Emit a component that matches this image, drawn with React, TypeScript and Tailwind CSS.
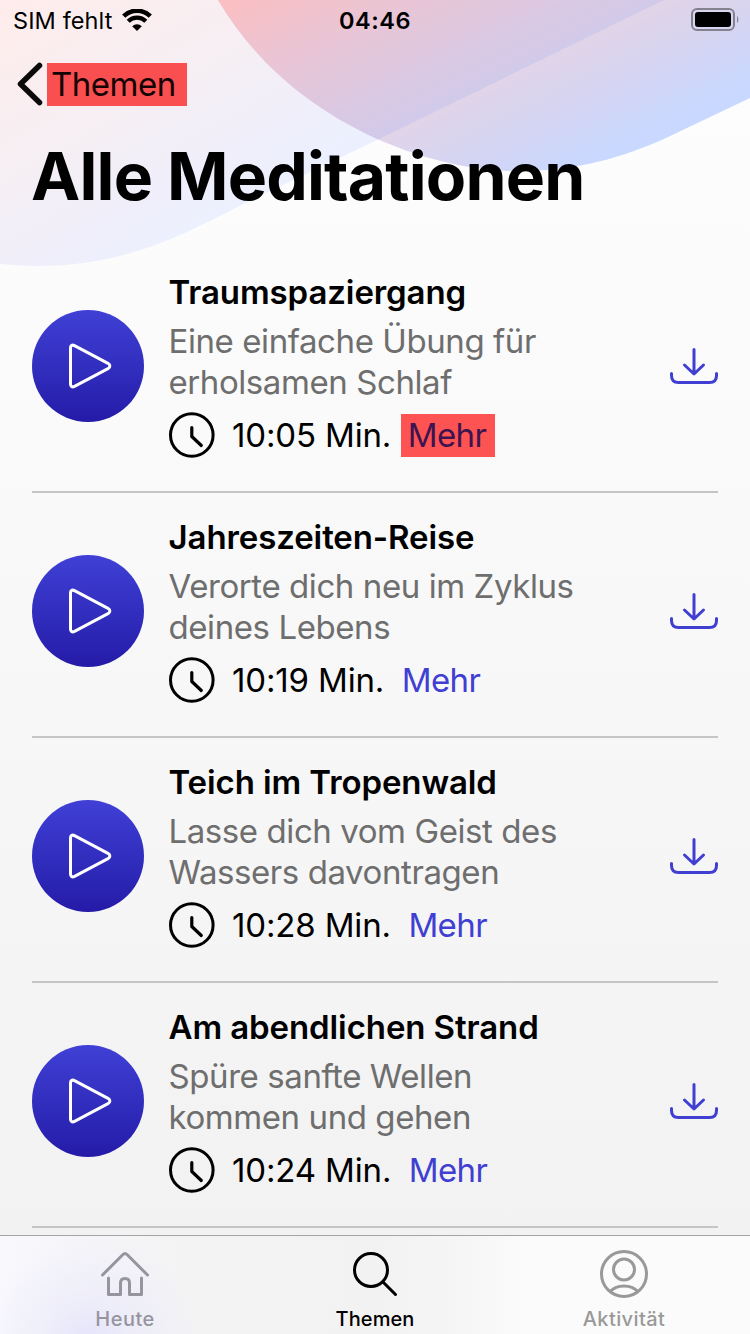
import React from "react";

type Meditation = {
  title: string;
  lines: [string, string];
  duration: string;
  marked?: boolean;
};

const meditations: Meditation[] = [
  {
    title: "Traumspaziergang",
    lines: ["Eine einfache Übung für", "erholsamen Schlaf"],
    duration: "10:05 Min.",
    marked: true,
  },
  {
    title: "Jahreszeiten-Reise",
    lines: ["Verorte dich neu im Zyklus", "deines Lebens"],
    duration: "10:19 Min.",
  },
  {
    title: "Teich im Tropenwald",
    lines: ["Lasse dich vom Geist des", "Wassers davontragen"],
    duration: "10:28 Min.",
  },
  {
    title: "Am abendlichen Strand",
    lines: ["Spüre sanfte Wellen", "kommen und gehen"],
    duration: "10:24 Min.",
  },
];

const leftWave =
  "M0 0H664L375 141L237 207C222 215 206 223 191 230C130 259 70 271 0 264Z";
const rightWave =
  "M218 0C252 57 302 104 375 138C420 158 468 171 518 171C577 171 625 157 668 137L750 98V0Z";

function Waves() {
  return (
    <svg
      className="absolute left-0 top-0"
      width="750"
      height="280"
      viewBox="0 0 750 280"
    >
      <defs>
        <linearGradient id="left" gradientUnits="userSpaceOnUse" x1="0" y1="0" x2="146" y2="261">
          <stop offset="0" stopColor="#ffeceb" />
          <stop offset="0.55" stopColor="#f5eff4" />
          <stop offset="0.85" stopColor="#efeefb" />
          <stop offset="1" stopColor="#ecf0fe" />
        </linearGradient>
        <linearGradient id="right" gradientUnits="userSpaceOnUse" x1="460" y1="100" x2="508" y2="200">
          <stop offset="0" stopColor="#e0d4e8" />
          <stop offset="0.5" stopColor="#d5d5f3" />
          <stop offset="1" stopColor="#c8d8ff" />
        </linearGradient>
        <linearGradient id="overlap" gradientUnits="userSpaceOnUse" x1="218" y1="0" x2="303" y2="176">
          <stop offset="0" stopColor="#fcbfc2" />
          <stop offset="0.5" stopColor="#e6c6d8" />
          <stop offset="1" stopColor="#d1caea" />
        </linearGradient>
        <clipPath id="rightClip">
          <path d={rightWave} />
        </clipPath>
      </defs>
      <path d={leftWave} fill="url(#left)" />
      <path d={rightWave} fill="url(#right)" />
      <path d={leftWave} fill="url(#overlap)" clipPath="url(#rightClip)" />
    </svg>
  );
}

function StatusBar() {
  return (
    <div className="flex h-10 items-center justify-between pl-[13px] pr-[11px]">
      <div className="flex w-[299px] items-center gap-[10px]">
        <span className="pt-px text-[23.5px] tracking-[0.1px]">SIM fehlt</span>
        <svg width="30" height="22" viewBox="0 0 30 22" fill="none">
          <path d="M1.7 7.2a19 19 0 0 1 26.6 0" stroke="black" strokeWidth="4.6" />
          <path d="M6.2 12.3a12.3 12.3 0 0 1 17.6 0" stroke="black" strokeWidth="4.2" />
          <path d="M10.2 17.2a7 7 0 0 1 9.6 0L15 22Z" fill="black" />
        </svg>
      </div>
      <span className="pt-px text-[23.5px] font-semibold tracking-[0.5px]">04:46</span>
      <div className="flex w-[301px] justify-end">
        <svg width="49" height="24" viewBox="0 0 49 24" fill="none">
          <rect x="2" y="1" width="42" height="21" rx="5" stroke="#85828f" strokeWidth="2" />
          <rect x="5" y="4" width="36" height="15" rx="3" fill="black" />
          <path d="M47 8c1.8 1 1.8 6 0 7Z" fill="#85828f" />
        </svg>
      </div>
    </div>
  );
}

function PlayButton() {
  return (
    <button className="mt-[62px] flex size-28 shrink-0 items-center justify-center rounded-full bg-linear-to-b from-[#4040d6] to-[#251aa8]">
      <svg width="112" height="112" viewBox="0 0 112 112" fill="none">
        <path
          d="M38.5 38v36c0 2.6 1.800 3.500 4 2.400L76 58.700c2.500-1.400 2.500-4 0-5.400L42.500 35.600c-2.200-1.100-4-.2-4 2.400Z"
          stroke="white"
          strokeWidth="3"
          strokeLinejoin="round"
        />
      </svg>
    </button>
  );
}

function ClockIcon() {
  return (
    <svg className="ml-px mr-[17px]" width="46" height="46" viewBox="0 0 46 46" fill="none" stroke="black">
      <circle cx="22.8" cy="23" r="21.3" strokeWidth="3" />
      <path d="M22.8 15.5v9l9.500 9" strokeWidth="3.200" strokeLinecap="round" strokeLinejoin="round" />
    </svg>
  );
}

function DownloadIcon() {
  return (
    <svg width="48" height="38" viewBox="0 0 48 38" fill="none" stroke="#403fd2" strokeWidth="3" strokeLinecap="round" strokeLinejoin="round">
      <path d="M24 2.5v24M14.500 18l9.500 9 9.500-9" />
      <path d="M1.500 26.500v2c0 4.500 2.500 7 7 7h31c4.500 0 7-2.500 7-7v-2" />
    </svg>
  );
}

function Row({ item }: { item: Meditation }) {
  return (
    <li className="flex h-[245px] border-b-2 border-[#c5c5c5]">
      <PlayButton />
      <div className="ml-6 grow whitespace-nowrap pt-6 text-[33px] leading-[41px]">
        <h2 className="pl-[0.5px] font-semibold tracking-[-0.1px]">{item.title}</h2>
        <p className="mt-2 pl-[0.5px] tracking-[-0.42px] text-[#6e6e6e]">
          {item.lines[0]}
          <br />
          {item.lines[1]}
        </p>
        <div className="mt-[9px] flex items-center">
          <ClockIcon />
          <span className="tracking-[-0.15px]">{item.duration}</span>
          {item.marked ? (
            <a className="ml-[9.5px] h-[43px] w-[94px] bg-[#fd5353] pl-[7px] leading-[43px] tracking-[-0.6px] text-[#3e1450]">
              Mehr
            </a>
          ) : (
            <a className="ml-[17.5px] tracking-[-0.6px] text-[#403fd2]">Mehr</a>
          )}
        </div>
      </div>
      <button className="mt-[99px] self-start">
        <DownloadIcon />
      </button>
    </li>
  );
}

function TabBar() {
  return (
    <nav className="absolute bottom-0 left-0 grid h-[99px] w-full grid-cols-3 border-t border-[#a5a5a5] bg-[radial-gradient(ellipse_110px_115px_at_90px_110px,#e5e3fb_0%,#eae9fab0_40%,#f3f3f300_100%),linear-gradient(90deg,#f9f9fd_0px,#f3f3f4_180px,#f2f2f2_380px,#f5f5f5_450px,#fbfbfb_530px)] text-[20px] font-medium">
      <div className="flex flex-col items-center text-[#96949f]">
        <svg className="mt-[14px]" width="50" height="48" viewBox="0 0 50 48" fill="none" stroke="currentColor" strokeWidth="3" strokeLinecap="round" strokeLinejoin="round">
          <path d="M2.500 25 23 4.500c1.500-1.500 2.500-1.500 4 0L47.500 25" />
          <path d="M8.500 28v16.500h12V33c0-3 1.500-4.500 4.500-4.500s4.500 1.500 4.500 4.500v11.500h12V28" />
        </svg>
        <span className="mt-[9px] leading-6 tracking-[0.5px]">Heute</span>
      </div>
      <div className="flex flex-col items-center text-black">
        <svg className="mt-[14px]" width="50" height="48" viewBox="0 0 50 48" fill="none" stroke="currentColor" strokeWidth="3" strokeLinecap="round">
          <circle cx="21" cy="20" r="16.500" />
          <path d="m33 32 12.500 12.500" />
        </svg>
        <span className="mt-[9px] leading-6 tracking-[0.1px]">Themen</span>
      </div>
      <div className="flex flex-col items-center pr-[2px] text-[#999]">
        <svg className="mt-[14px]" width="50" height="48" viewBox="0 0 50 48" fill="none" stroke="currentColor" strokeWidth="3">
          <circle cx="25" cy="24" r="22.500" />
          <circle cx="25" cy="19.500" r="10.500" />
          <path d="M11 41.500c7-7.500 21-7.500 28 0" />
        </svg>
        <span className="mt-[9px] leading-6 tracking-[0.4px]">Aktivität</span>
      </div>
    </nav>
  );
}

export default function App() {
  return (
    <div className="relative h-[1334px] w-[750px] overflow-hidden bg-linear-to-b from-[#fefefe] to-[#f1f1f1] font-['Inter',sans-serif] text-black">
      <Waves />
      <div className="relative">
        <StatusBar />
        <header>
          <div className="flex h-[88px] items-center pl-[17px]">
            <svg width="26" height="44" viewBox="0 0 26 44" fill="none">
              <path d="M22.500 3.500 3.500 22l19 18.500" stroke="#0b0b0b" strokeWidth="5.500" strokeLinecap="round" strokeLinejoin="round" />
            </svg>
            <span className="ml-1 h-[43px] w-[140px] bg-[#f94f50] pl-1 text-[33px] leading-[43px] tracking-[-0.5px] text-[#150303]">
              Themen
            </span>
          </div>
          <h1 className="h-[120px] whitespace-nowrap pl-[31px] text-[66px] font-bold leading-[96px] tracking-[-0.8px]">
            Alle Meditationen
          </h1>
        </header>
        <ul className="px-8">
          {meditations.map((item) => (
            <Row key={item.title} item={item} />
          ))}
        </ul>
      </div>
      <TabBar />
    </div>
  );
}
